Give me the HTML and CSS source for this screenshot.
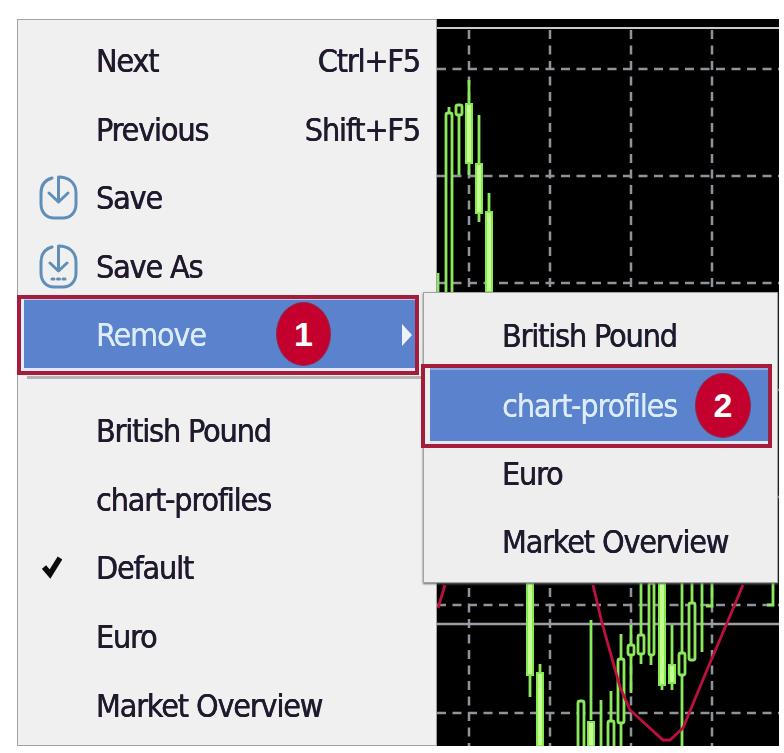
FILE: index.html
```html
<!DOCTYPE html>
<html lang="en">
<head>
<meta charset="utf-8">
<title>Remove chart profile</title>
<link rel="stylesheet" href="styles.css">
</head>
<body>
<div class="stage">
  <svg class="chart" viewBox="437 19 342 727" aria-hidden="true">
    <rect x="437" y="19" width="342" height="727" fill="#000"/>
    <path class="topline" d="M437 28H779"/>
    <path class="grid" d="M469 30V746M550 30V746M631 30V746M712 30V746M437 69H779M437 176H779M437 283H779M437 390H779M437 497H779M437 605H779M437 713H779"/>
    <path class="solid" d="M437 624H779"/>
    <g class="wick">
      <path d="M449 107V113M459 115V175M469 80V175M479 115V222M489 193V292M438 273V292"/>
      <path d="M530 583V697M540 664V746M591 620V720M601 700V746M611 691V721M621 634V746M631 625V693M641 583V635M641 654V664M651 655V665M662 583V690M672 625V690M682 583V746M692 583V603M702 583V652M712 583V606H706M773 583V605H767"/>
    </g>
    <g class="hollow">
      <rect x="446" y="113" width="6" height="190" rx="2"/>
      <rect x="456" y="105" width="6" height="10" rx="2"/>
      <rect x="578" y="701" width="6" height="50" rx="2"/>
      <rect x="608" y="721" width="6" height="30" rx="2"/>
      <rect x="618" y="659" width="6" height="64" rx="2"/>
      <rect x="628" y="645" width="6" height="10" rx="2"/>
      <rect x="638" y="635" width="6" height="19" rx="2"/>
      <rect x="649" y="583" width="5" height="72" rx="2"/>
      <rect x="679" y="653" width="6" height="22" rx="2"/>
      <rect x="689" y="603" width="6" height="57" rx="2"/>
    </g>
    <g class="fill">
      <rect x="466" y="104" width="6" height="59"/>
      <rect x="476" y="164" width="6" height="49"/>
      <rect x="486" y="212" width="6" height="80"/>
      <rect x="527" y="583" width="6" height="92"/>
      <rect x="537" y="673" width="6" height="73"/>
      <rect x="588" y="722" width="6" height="24"/>
      <rect x="659" y="583" width="6" height="102"/>
      <rect x="669" y="665" width="6" height="18"/>
    </g>
    <path class="ma" d="M438 608L445 585M593 585L602 623L620 687L630 710L663 740H670L683 728L707 670L727 623L743 585"/>
  </svg>

  <div class="menu menu-main">
    <div class="row"><span class="label">Next</span><span class="key">Ctrl+F5</span></div>
    <div class="row"><span class="label">Previous</span><span class="key">Shift+F5</span></div>
    <div class="row">
      <svg class="icon" viewBox="0 0 39 45"><path d="M13 3C6 5 2 10 2 18V29C2 38 8 43 15 43H24C31 43 37 38 37 29V18C37 8 30 2 19.500 2V27M10 18L19.500 27L29 18"/></svg>
      <span class="label">Save</span>
    </div>
    <div class="row">
      <svg class="icon" viewBox="0 0 39 45"><path d="M13 3C6 5 2 10 2 18V29C2 38 8 43 15 43H24C31 43 37 38 37 29V18C37 8 30 2 19.500 2V26M11 19L19.500 27L28 19"/><path class="dots" d="M13 35H15M18.500 35H20.500M24 35H26"/></svg>
      <span class="label">Save As</span>
    </div>
    <div class="row hot hot-main">
      <span class="label">Remove</span>
      <span class="badge badge-one">1</span>
      <span class="arrow"></span>
    </div>
    <div class="sep"></div>
    <div class="row"><span class="label">British Pound</span></div>
    <div class="row"><span class="label">chart-profiles</span></div>
    <div class="row">
      <svg class="check" viewBox="0 0 20 24"><path d="M2 12L8 19L18 3"/></svg>
      <span class="label">Default</span>
    </div>
    <div class="row"><span class="label">Euro</span></div>
    <div class="row"><span class="label">Market Overview</span></div>
  </div>

  <div class="menu menu-sub">
    <div class="row"><span class="label">British Pound</span></div>
    <div class="row hot hot-sub">
      <span class="label">chart-profiles</span>
      <span class="badge badge-two">2</span>
    </div>
    <div class="row"><span class="label">Euro</span></div>
    <div class="row"><span class="label">Market Overview</span></div>
  </div>
</div>
</body>
</html>
```
FILE: styles.css
```css
* { box-sizing: border-box; }
html, body { margin: 0; background: #fff; }
.stage {
  position: relative;
  width: 784px;
  height: 753px;
  overflow: hidden;
  font-family: "DejaVu Sans Condensed", "DejaVu Sans", sans-serif;
  font-size: 32px;
  letter-spacing: -1.150px;
  color: #1d1b2b;
}
.chart {
  position: absolute;
  left: 437px;
  top: 19px;
  width: 342px;
  height: 727px;
  filter: blur(0.6px);
}
.topline { stroke: #c9cbcf; stroke-width: 2; fill: none; }
.grid { stroke: #8f939b; stroke-width: 2.500; stroke-dasharray: 9 6.500; fill: none; }
.solid { stroke: #9a9ea6; stroke-width: 2.500; fill: none; }
.wick path { stroke: #8aea5c; stroke-width: 2.800; fill: none; }
.hollow rect { stroke: #8aea5c; stroke-width: 2.800; fill: #000; }
.fill rect { fill: #c4ff90; stroke: #84ea52; stroke-width: 2; }
.ma { stroke: #bd1040; stroke-width: 2.800; fill: none; }

.menu {
  position: absolute;
  display: flex;
  flex-direction: column;
  background: #f0f0f0;
  border: 1px solid #a2a2a2;
}
.menu-main {
  left: 17px;
  top: 19px;
  width: 420px;
  height: 727px;
  padding-top: 7px;
}
.menu-sub {
  left: 423px;
  top: 292px;
  width: 355px;
  height: 291px;
  padding-top: 9px;
  background: #eeeeee;
  box-shadow: 0 1px 2px #666;
}
.row {
  position: relative;
  flex: none;
  display: flex;
  align-items: center;
  height: 68.600px;
  padding-left: 78px;
  padding-right: 16px;
}
.menu-sub .row { padding-left: 78px; }
.label, .key {
  filter: blur(0.6px);
  text-shadow: -0.3px 0 #5a2438, 0.3px 0 #2c4a70;
}
.key { margin-left: auto; }
.hot .label { text-shadow: 0.2px 0 #cfe6f5; }
.sep {
  flex: none;
  height: 27.500px;
  margin-left: 9px;
  background: linear-gradient(#0000 7px, #b4b4b4 7px, #b4b4b4 10px, #0000 10px);
}
.icon {
  position: absolute;
  left: 21px;
  top: 11px;
  width: 39px;
  height: 45px;
  filter: blur(0.5px);
}
.icon path { fill: none; stroke: #5f8fb8; stroke-width: 3; stroke-linecap: round; stroke-linejoin: round; }
.check {
  position: absolute;
  left: 24px;
  top: 21px;
  width: 20px;
  height: 24px;
}
.check path { fill: none; stroke: #0c0c0c; stroke-width: 5.500; }
.hot {
  color: #dcecf8;
  background: #5b82cc;
  border: 4px solid #a61d3c;
  z-index: 1;
}
.hot-main {
  height: 80px;
  margin: -6px 17px -6px -1px;
  padding-left: 75px;
  padding-right: 3px;
  box-shadow: inset 3px 0 0 #e6edf6, inset 0 -3px 0 #dfe8f4, inset 0 1px 0 #b9cbea;
}
.menu-sub .hot-sub {
  height: 84px;
  margin: -7px 5px -8px -3px;
  padding-left: 77px;
  box-shadow: inset 5px 0 0 #eeeeee, inset 0 -3px 0 #dfe8f4, inset 0 2px 0 #8fabdf;
}
.badge {
  position: absolute;
  display: flex;
  align-items: center;
  justify-content: center;
  background: #c4002f;
  color: #fff;
  font-family: "Liberation Sans", sans-serif;
  font-weight: 700;
  font-size: 34px;
  letter-spacing: 0;
  border-radius: 50%;
  border: 1px solid #8f2a4e;
}
.badge-one { left: 255px; top: 3px; width: 55px; height: 64px; }
.badge-two { left: 270px; top: 5px; width: 56px; height: 65px; }
.arrow {
  margin-left: auto;
  width: 0;
  height: 0;
  border-left: 10px solid #eef3fb;
  border-top: 11px solid transparent;
  border-bottom: 11px solid transparent;
}
```
